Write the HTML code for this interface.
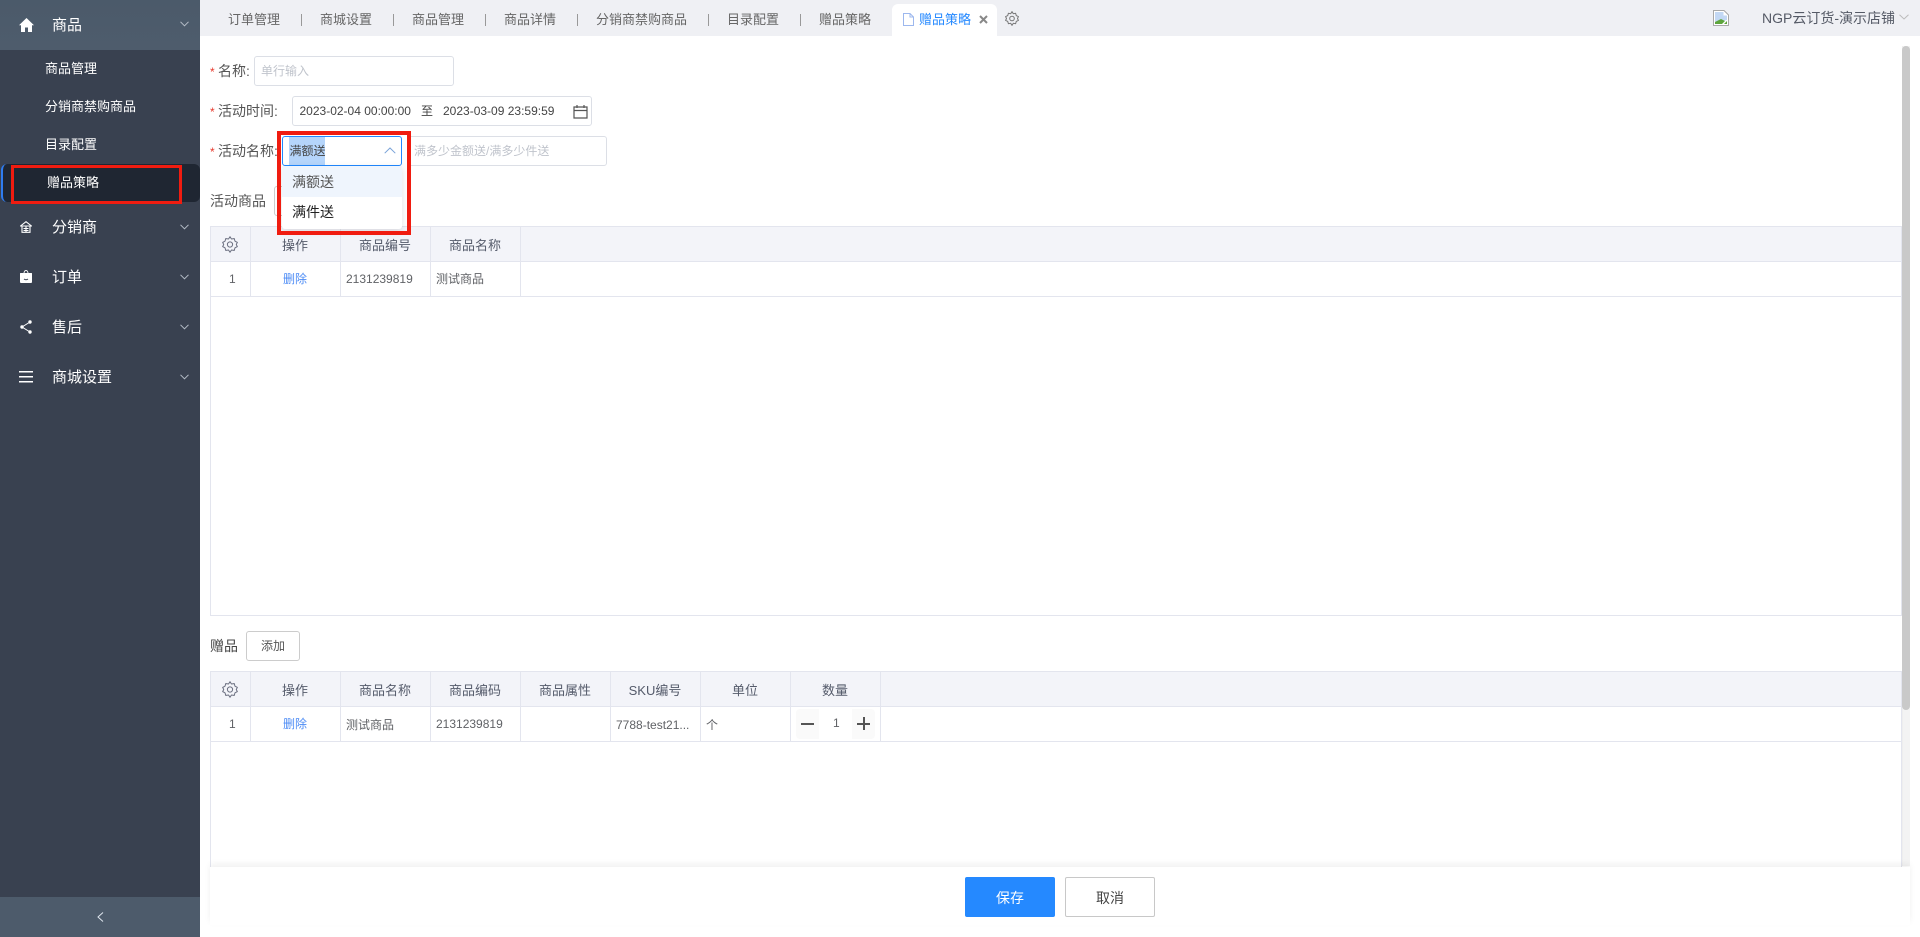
<!DOCTYPE html>
<html><head><meta charset="utf-8"><style>
html,body{margin:0;padding:0;width:1920px;height:937px;overflow:hidden;background:#fff}
body{position:relative;font-family:"Liberation Sans","Noto Sans CJK SC",sans-serif;font-size:13px;color:#555}
.a{position:absolute;box-sizing:border-box}
.t{position:absolute;white-space:nowrap;line-height:20px;height:20px}
.m{color:#fff;font-size:15px;left:52px}
.s{color:#fff;font-size:13px;left:45px}
.tab{color:#666;font-size:13px}
.sep{position:absolute;width:1px;height:12px;top:14px;background:#999}
.in{position:absolute;box-sizing:border-box;border:1px solid #dcdfe6;border-radius:3px;background:#fff}
.ph{color:#c0c4cc;font-size:12px}
.star{position:absolute;color:#e8392c;font-size:12px;left:210px;line-height:20px}
.lb{color:#555;font-size:14px;left:218px}
.tb{position:absolute;left:210px;width:1692px;border:1px solid #e3e5ee;box-sizing:border-box;background:#fff}
.hd{position:absolute;height:35px;background:#f3f4f9;border-bottom:1px solid #e3e5ee;box-sizing:border-box}
.ln{position:absolute;width:1px;background:#e3e5ee}
.hl{position:absolute;height:1px;background:#e3e5ee}
.th{font-size:13px;color:#555b6b;text-align:center;width:90px}
.td{font-size:12px;color:#606266}
svg{position:absolute;display:block}
</style></head><body>

<!-- sidebar -->
<div class="a" style="left:0;top:0;width:200px;height:937px;background:#394150"></div>
<div class="a" style="left:0;top:0;width:200px;height:50px;background:linear-gradient(#4b5a6a,#4e5c6c)"></div>
<svg style="left:19px;top:18px" width="15" height="14" viewBox="0 0 15 14"><path d="M7.5 0L15 7.2H13V14H9V9.5H6V14H2V7.2H0Z" fill="#fff"/></svg>
<div class="t m" style="top:16px">商品</div>
<svg style="left:180px;top:21px" width="9" height="6" viewBox="0 0 9 6"><path d="M.5.8L4.5 4.8 8.500.8" fill="none" stroke="#b6bec8" stroke-width="1"/></svg>
<div class="t s" style="top:59px">商品管理</div>
<div class="t s" style="top:97px">分销商禁购商品</div>
<div class="t s" style="top:135px">目录配置</div>
<div class="a" style="left:1px;top:164px;width:199px;height:38px;background:#1f2632;border-left:2px solid #2f7cf0;border-radius:6px"></div>
<div class="t s" style="top:173px;left:47px">赠品策略</div>
<div class="a" style="left:11px;top:165px;width:171px;height:39px;border:3px solid #f01c10"></div>

<svg style="left:20px;top:221px" width="12" height="12" viewBox="0 0 12 12"><path d="M6 .7L11.500 5H.5ZM2 5V11.300H10V5M6 5V11.300M3.500 7.500H8.500M3.500 9.500H8.500" fill="none" stroke="#fff" stroke-width="1.100"/></svg>
<div class="t m" style="top:218px">分销商</div>
<svg style="left:180px;top:224px" width="9" height="6" viewBox="0 0 9 6"><path d="M.5.8L4.5 4.8 8.500.8" fill="none" stroke="#b6bec8"/></svg>

<svg style="left:20px;top:270px" width="12" height="13" viewBox="0 0 12 13"><path d="M0 3.500Q0 3 .5 3H3.500Q4 0 6 0T8.500 3H11.500Q12 3 12 3.500V12Q12 13 11 13H1Q0 13 0 12Z M4.500 3H7.500Q7.300 1 6 1T4.500 3Z" fill="#fff" fill-rule="evenodd"/><path d="M4 9Q6 10.500 8 9" fill="none" stroke="#394150"/></svg>
<div class="t m" style="top:268px">订单</div>
<svg style="left:180px;top:274px" width="9" height="6" viewBox="0 0 9 6"><path d="M.5.8L4.5 4.8 8.500.8" fill="none" stroke="#b6bec8"/></svg>

<svg style="left:20px;top:320px" width="12" height="14" viewBox="0 0 12 14"><path d="M10 2L2 7 10 12" fill="none" stroke="#fff"/><circle cx="10" cy="2" r="1.700" fill="#fff"/><circle cx="2" cy="7" r="1.700" fill="#fff"/><circle cx="10" cy="12" r="1.700" fill="#fff"/></svg>
<div class="t m" style="top:318px">售后</div>
<svg style="left:180px;top:324px" width="9" height="6" viewBox="0 0 9 6"><path d="M.5.8L4.5 4.8 8.500.8" fill="none" stroke="#b6bec8"/></svg>

<svg style="left:19px;top:371px" width="14" height="12" viewBox="0 0 14 12"><path d="M0 0H14V1.500H0ZM0 5H14V6.500H0ZM0 10H14V11.500H0Z" fill="#fff"/></svg>
<div class="t m" style="top:368px">商城设置</div>
<svg style="left:180px;top:374px" width="9" height="6" viewBox="0 0 9 6"><path d="M.5.8L4.5 4.8 8.500.8" fill="none" stroke="#b6bec8"/></svg>

<div class="a" style="left:0;top:897px;width:200px;height:40px;background:#4d5b6b"></div>
<svg style="left:97px;top:912px" width="7" height="10" viewBox="0 0 7 10"><path d="M6 .5L1 5 6 9.500" fill="none" stroke="#dfe6ee"/></svg>

<!-- header -->
<div class="a" style="left:200px;top:0;width:1720px;height:36px;background:#eff0f4"></div>
<div class="t tab" style="left:228px;top:10px">订单管理</div><div class="sep" style="left:301px"></div>
<div class="t tab" style="left:320px;top:10px">商城设置</div><div class="sep" style="left:393px"></div>
<div class="t tab" style="left:412px;top:10px">商品管理</div><div class="sep" style="left:485px"></div>
<div class="t tab" style="left:504px;top:10px">商品详情</div><div class="sep" style="left:577px"></div>
<div class="t tab" style="left:596px;top:10px">分销商禁购商品</div><div class="sep" style="left:708px"></div>
<div class="t tab" style="left:727px;top:10px">目录配置</div><div class="sep" style="left:800px"></div>
<div class="t tab" style="left:819px;top:10px">赠品策略</div>
<div class="a" style="left:892px;top:4px;width:105px;height:32px;background:#fff;border-radius:6px 6px 0 0"></div>
<svg style="left:903px;top:13px" width="11" height="13" viewBox="0 0 11 13"><path d="M.5.5H7L10.500 4V12.500H.5ZM7 .5V4H10.500" fill="none" stroke="#9db8ee"/></svg>
<div class="t" style="left:919px;top:10px;color:#2589ff;font-size:13px">赠品策略</div>
<svg style="left:979px;top:15px" width="9" height="9" viewBox="0 0 9 9"><path d="M1 1L8 8M8 1L1 8" stroke="#888" stroke-width="2"/></svg>
<svg style="left:1005px;top:11px" width="14" height="15" viewBox="0 0 14 15"><path d="M7 .7L8.300 2.700 10.600 2.300 11.300 4.600 13.400 5.600 12.500 7.500 13.400 9.400 11.300 10.400 10.600 12.700 8.300 12.300 7 14.300 5.700 12.300 3.400 12.700 2.700 10.400 .6 9.400 1.500 7.500 .6 5.600 2.700 4.600 3.400 2.300 5.700 2.700Z" fill="none" stroke="#777" stroke-width="1"/><circle cx="7" cy="7.500" r="2.300" fill="none" stroke="#777"/></svg>
<svg style="left:1713px;top:10px" width="16" height="16" viewBox="0 0 16 16"><path d="M.5.500H11L15.500 5V15.500H.5Z" fill="#fff" stroke="#a8a8a8"/><path d="M2 2H10.500V5.500H14V10L2 13Z" fill="#c3d8f4"/><path d="M2 14V12L8 9 12 11 9 14Z" fill="#5da53c"/><path d="M11 14L14 11V14Z" fill="#5da53c"/></svg>
<div class="t" style="left:1762px;top:8px;font-size:14px;color:#555a66">NGP云订货-演示店铺</div>
<svg style="left:1899px;top:14px" width="10" height="6" viewBox="0 0 10 6"><path d="M.5.8L5 5 9.500.8" fill="none" stroke="#bbb"/></svg>

<!-- scrollbar -->
<div class="a" style="left:1902px;top:46px;width:8px;height:820px;background:#f3f3f3;border-left:1px solid #eee"></div>
<div class="a" style="left:1902px;top:46px;width:8px;height:664px;background:#c9c9c9;border-radius:4px"></div>

<!-- form -->
<div class="star" style="top:62px">*</div>
<div class="t lb" style="top:61px">名称:</div>
<div class="in" style="left:254px;top:56px;width:200px;height:30px"></div>
<div class="t ph" style="left:261px;top:61px">单行输入</div>

<div class="star" style="top:102px">*</div>
<div class="t lb" style="top:101px">活动时间:</div>
<div class="in" style="left:292px;top:96px;width:300px;height:30px"></div>
<div class="t" style="left:299.500px;top:101px;font-size:12px;color:#444">2023-02-04 00:00:00</div>
<div class="t" style="left:421px;top:101px;font-size:12px;color:#444">至</div>
<div class="t" style="left:443px;top:101px;font-size:12px;color:#444">2023-03-09 23:59:59</div>
<svg style="left:573px;top:104px" width="15" height="15" viewBox="0 0 15 15"><path d="M1 3H14V14H1ZM1 6.500H14M4 1V4M11 1V4" fill="none" stroke="#555" stroke-width="1.200"/></svg>

<div class="star" style="top:142px">*</div>
<div class="t lb" style="top:141px">活动名称:</div>
<div class="in" style="left:408px;top:136px;width:199px;height:30px"></div>
<div class="t ph" style="left:414px;top:141px">满多少金额送/满多少件送</div>

<div class="t" style="left:210px;top:191px;font-size:14px;color:#555">活动商品</div>
<div class="in" style="left:274px;top:186px;width:54px;height:30px;border-color:#ccc"></div>

<div class="in" style="left:282px;top:136px;width:120px;height:30px;border-color:#2288ff"></div>
<div class="a" style="left:289px;top:137px;width:36px;height:28px;background:#b5d5fb"></div>
<div class="t" style="left:289.500px;top:141px;font-size:12px;color:#444">满额送</div>
<svg style="left:384px;top:147px" width="12" height="7" viewBox="0 0 12 7"><path d="M.7 6.200L6 1 11.300 6.200" fill="none" stroke="#7aa3d8"/></svg>

<!-- table 1 -->
<div class="tb" style="top:226px;height:390px"></div>
<div class="hd" style="left:211px;top:227px;width:1690px"></div>
<div class="ln" style="left:250px;top:227px;height:70px"></div>
<div class="ln" style="left:340px;top:227px;height:70px"></div>
<div class="ln" style="left:430px;top:227px;height:70px"></div>
<div class="ln" style="left:520px;top:227px;height:70px"></div>
<div class="hl" style="left:211px;top:296px;width:1690px"></div>
<svg style="left:222px;top:236px" width="16" height="17" viewBox="0 0 16 17"><path d="M8 .8L9.500 3 12.200 2.600 13 5.200 15.300 6.400 14.300 8.500 15.300 10.600 13 11.800 12.200 14.400 9.500 14 8 16.200 6.500 14 3.800 14.400 3 11.800 .7 10.600 1.700 8.500 .7 6.400 3 5.200 3.800 2.600 6.500 3Z" fill="none" stroke="#6b6f80"/><circle cx="8" cy="8.500" r="2.600" fill="none" stroke="#6b6f80"/></svg>
<div class="t th" style="left:250px;top:236px">操作</div>
<div class="t th" style="left:340px;top:236px">商品编号</div>
<div class="t th" style="left:430px;top:236px">商品名称</div>
<div class="t td" style="left:229px;top:269px">1</div>
<div class="t td" style="left:283px;top:269px;color:#4d8cf5">删除</div>
<div class="t td" style="left:346px;top:269px">2131239819</div>
<div class="t td" style="left:436px;top:269px">测试商品</div>

<!-- dropdown -->
<div class="a" style="left:282px;top:166px;width:120px;height:63px;background:#fff;box-shadow:0 2px 8px rgba(0,0,0,.12);border-radius:0 0 3px 3px"></div>
<div class="a" style="left:282px;top:166px;width:120px;height:31px;background:#eff5fd"></div>
<div class="t" style="left:292px;top:172px;font-size:14px;color:#555">满额送</div>
<div class="t" style="left:292px;top:202px;font-size:14px;color:#222">满件送</div>
<div class="a" style="left:277px;top:131px;width:134px;height:104px;border:4px solid #f01c10"></div>

<!-- gift -->
<div class="t" style="left:210px;top:636px;font-size:14px;color:#444">赠品</div>
<div class="in" style="left:246px;top:631px;width:54px;height:30px;border-color:#ccc"></div>
<div class="t" style="left:261px;top:636px;font-size:12px;color:#555">添加</div>

<div class="tb" style="top:671px;height:200px"></div>
<div class="hd" style="left:211px;top:672px;width:1690px"></div>
<div class="ln" style="left:250px;top:672px;height:70px"></div>
<div class="ln" style="left:340px;top:672px;height:70px"></div>
<div class="ln" style="left:430px;top:672px;height:70px"></div>
<div class="ln" style="left:520px;top:672px;height:70px"></div>
<div class="ln" style="left:610px;top:672px;height:70px"></div>
<div class="ln" style="left:700px;top:672px;height:70px"></div>
<div class="ln" style="left:790px;top:672px;height:70px"></div>
<div class="ln" style="left:880px;top:672px;height:70px"></div>
<div class="hl" style="left:211px;top:741px;width:1690px"></div>
<svg style="left:222px;top:681px" width="16" height="17" viewBox="0 0 16 17"><path d="M8 .8L9.500 3 12.200 2.600 13 5.200 15.300 6.400 14.300 8.500 15.300 10.600 13 11.800 12.200 14.400 9.500 14 8 16.200 6.500 14 3.800 14.400 3 11.800 .7 10.600 1.700 8.500 .7 6.400 3 5.200 3.800 2.600 6.500 3Z" fill="none" stroke="#6b6f80"/><circle cx="8" cy="8.500" r="2.600" fill="none" stroke="#6b6f80"/></svg>
<div class="t th" style="left:250px;top:681px">操作</div>
<div class="t th" style="left:340px;top:681px">商品名称</div>
<div class="t th" style="left:430px;top:681px">商品编码</div>
<div class="t th" style="left:520px;top:681px">商品属性</div>
<div class="t th" style="left:610px;top:681px">SKU编号</div>
<div class="t th" style="left:700px;top:681px">单位</div>
<div class="t th" style="left:790px;top:681px">数量</div>
<div class="t td" style="left:229px;top:714px">1</div>
<div class="t td" style="left:283px;top:714px;color:#4d8cf5">删除</div>
<div class="t td" style="left:346px;top:715px">测试商品</div>
<div class="t td" style="left:436px;top:714px">2131239819</div>
<div class="t td" style="left:616px;top:715px">7788-test21...</div>
<div class="t td" style="left:706px;top:715px">个</div>
<div class="a" style="left:796px;top:709px;width:23px;height:30px;background:#fafafa;border-radius:4px 0 0 4px"></div>
<div class="a" style="left:852px;top:709px;width:23px;height:30px;background:#fafafa;border-radius:0 4px 4px 0"></div>
<div class="a" style="left:801px;top:723px;width:13px;height:2px;background:#555"></div>
<div class="a" style="left:857px;top:723px;width:13px;height:2px;background:#555"></div>
<div class="a" style="left:863px;top:717px;width:2px;height:13px;background:#555"></div>
<div class="t td" style="left:833px;top:713px">1</div>

<!-- footer -->
<div class="a" style="left:210px;top:867px;width:1700px;height:58px;background:#fff;box-shadow:0 -3px 6px rgba(0,0,0,.06)"></div>
<div class="a" style="left:965px;top:877px;width:90px;height:40px;background:#2589ff;border-radius:2px"></div>
<div class="t" style="left:996px;top:888px;font-size:14px;color:#fff">保存</div>
<div class="a" style="left:1065px;top:877px;width:90px;height:40px;background:#fff;border:1px solid #c8c8c8;border-radius:2px"></div>
<div class="t" style="left:1096px;top:888px;font-size:14px;color:#444">取消</div>
</body></html>
